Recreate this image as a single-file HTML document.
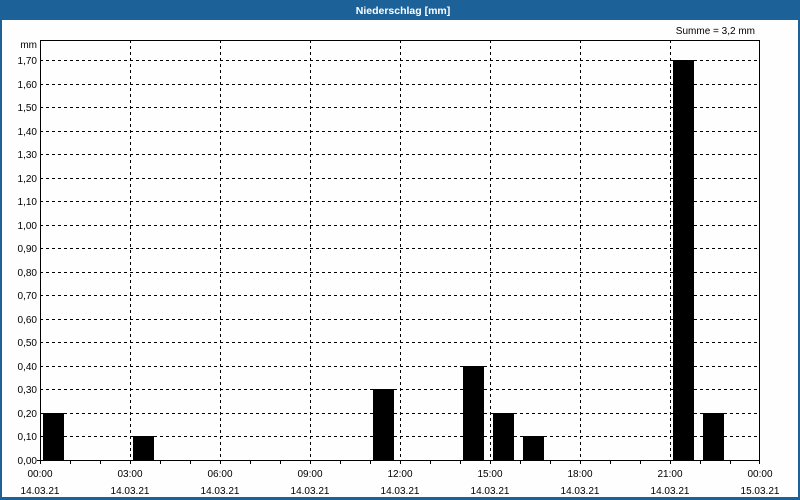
<!DOCTYPE html>
<html><head><meta charset="utf-8"><style>
html,body{margin:0;padding:0;background:#fdfefd;}
svg{display:block;font-family:"Liberation Sans",sans-serif;}
</style></head><body>
<svg width="800" height="500" viewBox="0 0 800 500" xmlns="http://www.w3.org/2000/svg">
<rect x="0" y="0" width="800" height="500" fill="#fdfefd"/>
<rect x="0" y="0" width="800" height="20" fill="#1c6299"/>
<rect x="0" y="0" width="2" height="500" fill="#1c6299"/>
<rect x="798" y="0" width="2" height="500" fill="#1c6299"/>
<rect x="0" y="497" width="800" height="3" fill="#1c6299"/>
<text x="403" y="14" fill="#fff" font-size="10.5" font-weight="bold" text-anchor="middle">Niederschlag [mm]</text>
<text x="755" y="34" fill="#000" font-size="10" text-anchor="end">Summe = 3,2 mm</text>
<text x="37" y="48" fill="#000" font-size="10" text-anchor="end">mm</text>
<g stroke="#000" stroke-width="1" stroke-dasharray="3,3" shape-rendering="crispEdges">
<line x1="40" y1="60.5" x2="760" y2="60.5"/><line x1="40" y1="84.5" x2="760" y2="84.5"/><line x1="40" y1="107.5" x2="760" y2="107.5"/><line x1="40" y1="131.5" x2="760" y2="131.5"/><line x1="40" y1="154.5" x2="760" y2="154.5"/><line x1="40" y1="178.5" x2="760" y2="178.5"/><line x1="40" y1="201.5" x2="760" y2="201.5"/><line x1="40" y1="225.5" x2="760" y2="225.5"/><line x1="40" y1="248.5" x2="760" y2="248.5"/><line x1="40" y1="272.5" x2="760" y2="272.5"/><line x1="40" y1="295.5" x2="760" y2="295.5"/><line x1="40" y1="319.5" x2="760" y2="319.5"/><line x1="40" y1="342.5" x2="760" y2="342.5"/><line x1="40" y1="366.5" x2="760" y2="366.5"/><line x1="40" y1="389.5" x2="760" y2="389.5"/><line x1="40" y1="413.5" x2="760" y2="413.5"/><line x1="40" y1="436.5" x2="760" y2="436.5"/>
<line x1="130.5" y1="40" x2="130.5" y2="460"/><line x1="220.5" y1="40" x2="220.5" y2="460"/><line x1="310.5" y1="40" x2="310.5" y2="460"/><line x1="400.5" y1="40" x2="400.5" y2="460"/><line x1="490.5" y1="40" x2="490.5" y2="460"/><line x1="580.5" y1="40" x2="580.5" y2="460"/><line x1="670.5" y1="40" x2="670.5" y2="460"/>
</g>
<g fill="#000" shape-rendering="crispEdges">
<rect x="43" y="413" width="21" height="47"/>
<rect x="133" y="436" width="21" height="24"/>
<rect x="373" y="389" width="21" height="71"/>
<rect x="463" y="366" width="21" height="94"/>
<rect x="493" y="413" width="21" height="47"/>
<rect x="523" y="436" width="21" height="24"/>
<rect x="673" y="60" width="21" height="400"/>
<rect x="703" y="413" width="21" height="47"/>
</g>
<rect x="40.5" y="40.5" width="719" height="420" fill="none" stroke="#000" stroke-width="1" shape-rendering="crispEdges"/>
<g stroke="#000" stroke-width="1" shape-rendering="crispEdges">
<line x1="40.5" y1="460" x2="40.5" y2="464"/><line x1="70.5" y1="460" x2="70.5" y2="464"/><line x1="100.5" y1="460" x2="100.5" y2="464"/><line x1="130.5" y1="460" x2="130.5" y2="464"/><line x1="160.5" y1="460" x2="160.5" y2="464"/><line x1="190.5" y1="460" x2="190.5" y2="464"/><line x1="220.5" y1="460" x2="220.5" y2="464"/><line x1="250.5" y1="460" x2="250.5" y2="464"/><line x1="280.5" y1="460" x2="280.5" y2="464"/><line x1="310.5" y1="460" x2="310.5" y2="464"/><line x1="340.5" y1="460" x2="340.5" y2="464"/><line x1="370.5" y1="460" x2="370.5" y2="464"/><line x1="400.5" y1="460" x2="400.5" y2="464"/><line x1="430.5" y1="460" x2="430.5" y2="464"/><line x1="460.5" y1="460" x2="460.5" y2="464"/><line x1="490.5" y1="460" x2="490.5" y2="464"/><line x1="520.5" y1="460" x2="520.5" y2="464"/><line x1="550.5" y1="460" x2="550.5" y2="464"/><line x1="580.5" y1="460" x2="580.5" y2="464"/><line x1="610.5" y1="460" x2="610.5" y2="464"/><line x1="640.5" y1="460" x2="640.5" y2="464"/><line x1="670.5" y1="460" x2="670.5" y2="464"/><line x1="700.5" y1="460" x2="700.5" y2="464"/><line x1="730.5" y1="460" x2="730.5" y2="464"/><line x1="759.5" y1="460" x2="759.5" y2="464"/>
<line x1="37" y1="460.5" x2="40" y2="460.5"/>
</g>
<g font-size="10" fill="#000" text-anchor="end">
<text x="37" y="64">1,70</text><text x="37" y="88">1,60</text><text x="37" y="111">1,50</text><text x="37" y="135">1,40</text><text x="37" y="158">1,30</text><text x="37" y="182">1,20</text><text x="37" y="205">1,10</text><text x="37" y="229">1,00</text><text x="37" y="252">0,90</text><text x="37" y="276">0,80</text><text x="37" y="299">0,70</text><text x="37" y="323">0,60</text><text x="37" y="346">0,50</text><text x="37" y="370">0,40</text><text x="37" y="393">0,30</text><text x="37" y="417">0,20</text><text x="37" y="440">0,10</text><text x="37" y="464">0,00</text>
</g>
<g font-size="10" fill="#000" text-anchor="middle">
<text x="40" y="477">00:00</text><text x="40" y="494">14.03.21</text>
<text x="130" y="477">03:00</text><text x="130" y="494">14.03.21</text>
<text x="220" y="477">06:00</text><text x="220" y="494">14.03.21</text>
<text x="310" y="477">09:00</text><text x="310" y="494">14.03.21</text>
<text x="400" y="477">12:00</text><text x="400" y="494">14.03.21</text>
<text x="490" y="477">15:00</text><text x="490" y="494">14.03.21</text>
<text x="580" y="477">18:00</text><text x="580" y="494">14.03.21</text>
<text x="670" y="477">21:00</text><text x="670" y="494">14.03.21</text>
<text x="760" y="477">00:00</text><text x="760" y="494">15.03.21</text>
</g>
</svg>
</body></html>
